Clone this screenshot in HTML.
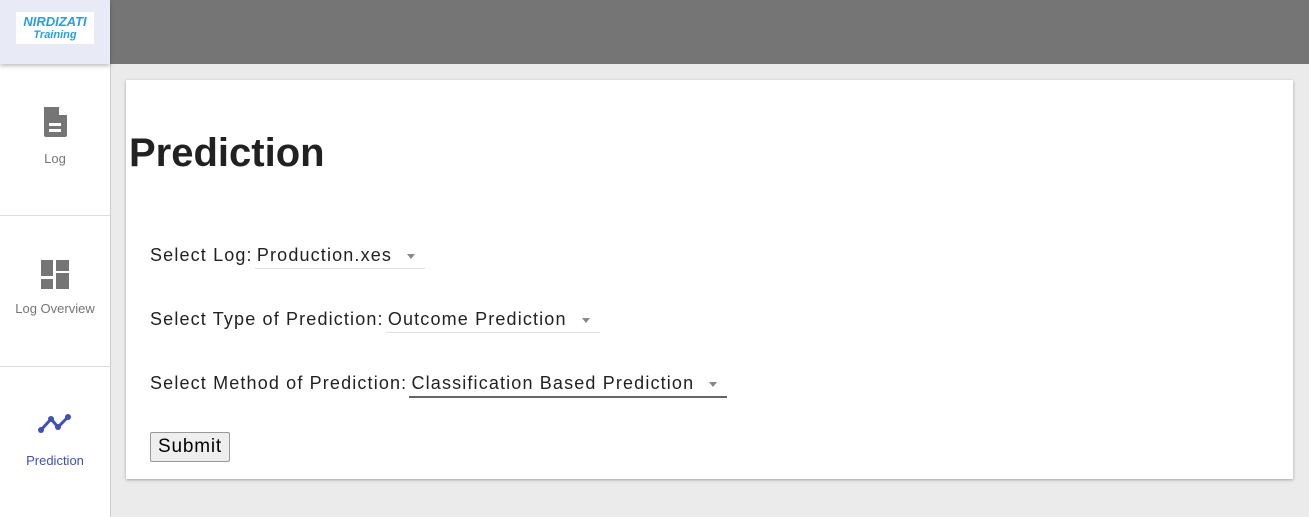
<!DOCTYPE html>
<html><head><style>
body{margin:0;width:1309px;height:517px;background:#ebebeb;font-family:"Liberation Sans",Arial,sans-serif;position:relative;overflow:hidden}
.hdr{position:absolute;left:110px;top:0;width:1199px;height:64px;background:#757575}
.logo{position:absolute;left:0;top:0;width:110px;height:64px;background:#e8eaf6;box-shadow:0 2px 4px rgba(0,0,0,.25);z-index:2}
.logo div{position:absolute;left:16px;top:12px;width:78px;height:32px;background:#fff;color:#2a9de0;font-style:italic;font-weight:bold;text-align:center;line-height:12px;padding-top:4px;box-sizing:border-box}
.side{position:absolute;left:0;top:64px;width:111px;height:453px;background:#fff;border-right:1px solid #ccc;box-sizing:border-box}
.item{position:absolute;left:0;width:110px;text-align:center;font-size:13px;color:#757575}
.div{position:absolute;left:0;width:110px;height:1px;background:#ddd}
.card{position:absolute;left:126px;top:80px;width:1167px;height:399px;background:#fff;box-shadow:0 1px 3px rgba(0,0,0,.3)}
h1{position:absolute;left:3px;top:51px;margin:0;font-size:40px;font-weight:bold;color:#212121}
.row{position:absolute;left:24px;font-size:18px;color:#222;letter-spacing:1.15px;white-space:nowrap}
.sel{display:inline-block;position:relative;border-bottom:1px solid #e0e0e0;padding:0 33px 2px 2px;color:#222;margin-left:-4px}
.sel:after{content:"";position:absolute;right:10px;top:9px;border:4px solid transparent;border-top:5px solid #888}
button{position:absolute;left:24px;top:352px;font:19px "Liberation Sans",Arial,sans-serif;letter-spacing:0.8px;padding:1px 7px;background:#eee;border:1px solid #999;border-radius:2px;height:30px;width:80px}
</style></head><body>
<div class="hdr"></div>
<div class="logo"><div><span style="font-size:13px">NIRDIZATI</span><br><span style="font-size:11px">Training</span></div></div>
<div class="side">
<div class="item" style="top:42px"><svg width="26" height="32" viewBox="0 0 26 32"><path d="M2 1 h15 l8 8 v20 a2 2 0 0 1 -2 2 h-19 a2 2 0 0 1 -2 -2 z" fill="#757575"/><path d="M17 1 v8 h8" fill="#fff"/><rect x="7" y="17" width="12" height="3" fill="#fff"/><rect x="7" y="23" width="12" height="3" fill="#fff"/></svg><div style="margin-top:10px">Log</div></div>
<div class="div" style="top:151px"></div>
<div class="item" style="top:196px"><svg width="30" height="30" viewBox="0 0 30 30"><rect x="1" y="0" width="12" height="16" fill="#757575"/><rect x="16" y="0" width="13" height="11" fill="#757575"/><rect x="1" y="19" width="12" height="10" fill="#757575"/><rect x="16" y="13" width="13" height="16" fill="#757575"/></svg><div style="margin-top:8px">Log Overview</div></div>
<div class="div" style="top:302px"></div>
<div class="item" style="top:348px;color:#3f51b5"><svg width="36" height="24" viewBox="0 0 36 24"><polyline points="4,18 14,7 21,15 31,5" fill="none" stroke="#3f51b5" stroke-width="3"/><circle cx="4" cy="18" r="3" fill="#3f51b5"/><circle cx="14" cy="7" r="3" fill="#3f51b5"/><circle cx="21" cy="15" r="3" fill="#3f51b5"/><circle cx="31" cy="5" r="3" fill="#3f51b5"/></svg><div style="margin-top:14px">Prediction</div></div>
</div>
<div class="card">
<h1>Prediction</h1>
<div class="row" style="top:165px">Select Log: <span class="sel">Production.xes</span></div>
<div class="row" style="top:229px">Select Type of Prediction: <span class="sel">Outcome Prediction</span></div>
<div class="row" style="top:293px">Select Method of Prediction: <span class="sel" style="border-bottom:2px solid #666">Classification Based Prediction</span></div>
<button>Submit</button>
</div>
</body></html>
